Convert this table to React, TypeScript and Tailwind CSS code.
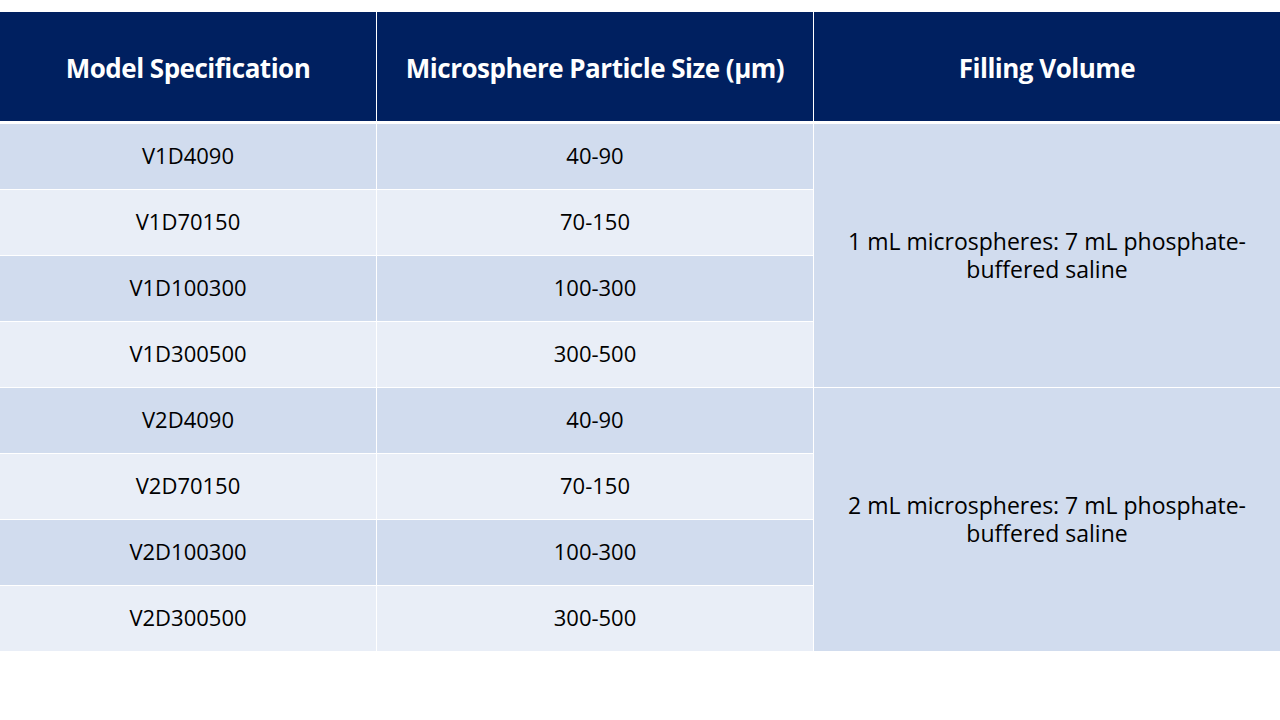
const GROUPS = [
  { prefix: "V1D", volume: "1 mL microspheres: 7 mL phosphate-" },
  { prefix: "V2D", volume: "2 mL microspheres: 7 mL phosphate-" },
];

const ROWS = [
  { code: "4090", size: "40-90", bg: "bg-[#d1dcee]" },
  { code: "70150", size: "70-150", bg: "bg-[#e9eef7]" },
  { code: "100300", size: "100-300", bg: "bg-[#d1dcee]" },
  { code: "300500", size: "300-500", bg: "bg-[#e9eef7]" },
];

const HEADERS = ["Model Specification", "Microsphere Particle Size (μm)", "Filling Volume"];

export default function App() {
  return (
    <div className="w-[1280px] h-[720px] bg-white pt-[12px] font-['Open_Sans',sans-serif]">
      <div className="grid grid-cols-[376px_436px_1fr] gap-x-px bg-white">
        {HEADERS.map((h) => (
          <div
            key={h}
            className="h-[109px] bg-[#002060] flex items-center justify-center pt-[3px] text-white text-[26px] font-bold tracking-[-0.5px]"
          >
            {h}
          </div>
        ))}
      </div>

      <div className="mt-[3px] flex flex-col gap-px bg-white text-[22px] text-black">
        {GROUPS.map((g) => (
          <div key={g.prefix} className="flex gap-px">
            <div className="w-[813px] flex flex-col gap-px">
              {ROWS.map((r) => (
                <div key={r.code} className="grid grid-cols-[376px_436px] gap-px h-[65px]">
                  <div className={`${r.bg} flex items-center justify-center pb-[2px]`}>
                    {g.prefix}
                    {r.code}
                  </div>
                  <div className={`${r.bg} flex items-center justify-center pb-[2px]`}>{r.size}</div>
                </div>
              ))}
            </div>
            <div className="flex-1 bg-[#d1dcee] flex flex-col items-center justify-center text-center text-[23px] leading-[28px] pb-[2px]">
              <span className="block">{g.volume}</span>
              <span className="block">buffered saline</span>
            </div>
          </div>
        ))}
      </div>
    </div>
  );
}
